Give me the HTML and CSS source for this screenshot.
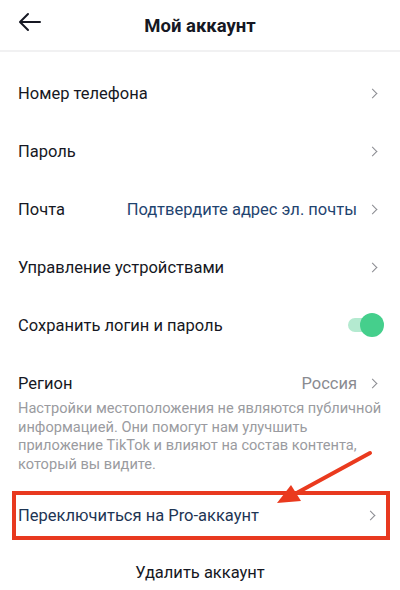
FILE: index.html
```html
<!DOCTYPE html>
<html lang="ru">
<head>
  <meta charset="UTF-8">
  <meta name="viewport" content="width=device-width, initial-scale=1.0">
  <title>Мой аккаунт</title>
  <link rel="stylesheet" href="styles.css">
</head>
<body>
  <div class="screen">
    <header class="topbar">
      <svg class="back" width="24" height="20" viewBox="0 0 24 20" fill="none" stroke="#161823" stroke-width="2" stroke-linecap="round" stroke-linejoin="round">
        <path d="M22 10H3"/>
        <path d="M10 2L2 10l8 8"/>
      </svg>
      <h1>Мой аккаунт</h1>
    </header>

    <div class="list">
      <div class="row">
        <span class="label">Номер телефона</span>
        <span class="chev"></span>
      </div>
      <div class="row">
        <span class="label">Пароль</span>
        <span class="chev"></span>
      </div>
      <div class="row">
        <span class="label">Почта</span>
        <span class="value link">Подтвердите адрес эл. почты</span>
        <span class="chev"></span>
      </div>
      <div class="row">
        <span class="label">Управление устройствами</span>
        <span class="chev"></span>
      </div>
      <div class="row">
        <span class="label">Сохранить логин и пароль</span>
        <span class="toggle"><span class="knob"></span></span>
      </div>

      <div class="region">
        <div class="row short">
          <span class="label">Регион</span>
          <span class="value">Россия</span>
          <span class="chev"></span>
        </div>
        <p class="note">Настройки местоположения не являются публичной информацией. Они помогут нам улучшить<br>приложение TikTok и влияют на состав контента, который вы видите.</p>
      </div>

      <div class="row pro">
        <span class="label">Переключиться на Pro-аккаунт</span>
        <span class="chev"></span>
      </div>

      <div class="delete">Удалить аккаунт</div>
    </div>

    <!-- annotation arrow drawn over the screenshot -->
    <svg class="pointer" width="400" height="590" viewBox="0 0 400 590">
      <path d="M370 453L293 495" stroke="#ea3a1e" stroke-width="4" stroke-linecap="round"/>
      <path d="M277 503L301 501L291 485Z" fill="#ea3a1e"/>
    </svg>
  </div>
</body>
</html>
```

FILE: styles.css
```css
body {
  margin: 0;
  background: #fff;
  font-family: Roboto, "Noto Sans", sans-serif;
  color: #161823;
}

.screen {
  position: relative;
  width: 400px;
  height: 590px;
  overflow: hidden;
}

/* Header */
.topbar {
  height: 50px;
  display: flex;
  align-items: center;
  justify-content: center;
  border-bottom: 2px solid #f1f1f2;
  position: relative;
}

.back {
  position: absolute;
  left: 18px;
  top: 12px;
}

.topbar h1 {
  margin: 0;
  font-size: 18.5px;
  font-weight: 700;
  padding-top: 2px;
}

/* Rows */
.list {
  padding-top: 12px;
}

.row {
  height: 58px;
  display: flex;
  align-items: center;
  padding: 0 22px 0 18px;
  font-size: 16.5px;
}

.label {
  flex: 1;
}

.value {
  color: #8a8b91;
  margin-right: 12px;
}

.link {
  color: #1f4470;
}

.chev {
  width: 6px;
  height: 6px;
  border-top: 1.5px solid #8a8b91;
  border-right: 1.5px solid #8a8b91;
  transform: rotate(45deg);
  margin-right: 2px;
}

/* Toggle */
.toggle {
  width: 32px;
  height: 14px;
  border-radius: 7px;
  background: #b4ead0;
  position: relative;
  margin-right: -2px;
}

.knob {
  position: absolute;
  right: -4px;
  top: -5px;
  width: 24px;
  height: 24px;
  border-radius: 50%;
  background: #45cf8c;
}

/* Region */
.region {
  padding-top: 13px;
}

.row.short {
  height: 32px;
}

.note {
  margin: 0;
  padding: 0 14px 0 18px;
  font-size: 14.6px;
  line-height: 18.5px;
  color: #9a9ba0;
}

/* Highlighted pro row */
.row.pro {
  margin: 18px 10px 0 12px;
  height: 41px;
  border: 4px solid #e8391f;
  padding: 0 10px 0 2px;
  color: #1e3554;
}

.delete {
  text-align: center;
  font-size: 16.5px;
  padding-top: 23px;
}

.pointer {
  position: absolute;
  left: 0;
  top: 0;
}
```
